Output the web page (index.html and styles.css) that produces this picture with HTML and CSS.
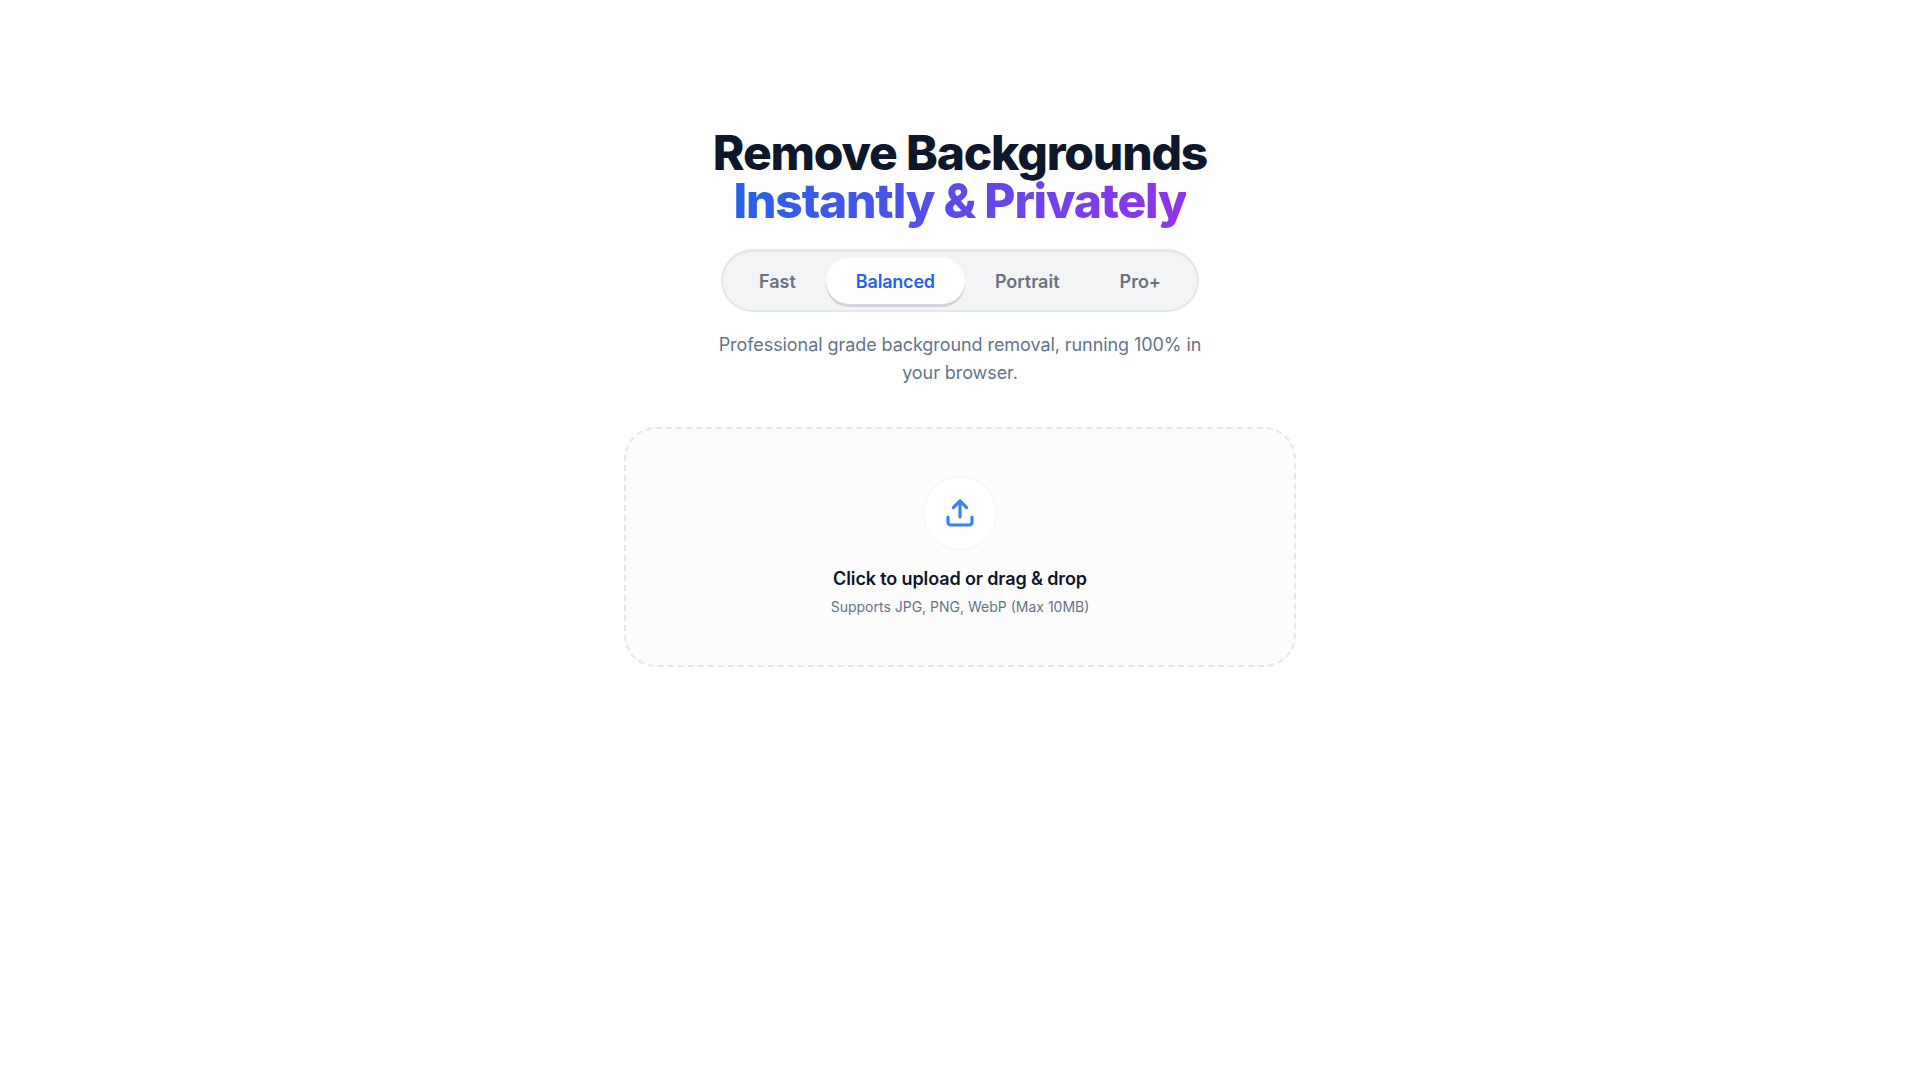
FILE: index.html
```html
<!DOCTYPE html>
<html lang="en">
<head>
    <meta charset="UTF-8">
    <meta name="viewport" content="width=device-width, initial-scale=1.0">
    <title>Remove Backgrounds</title>
    <link rel="stylesheet" href="styles.css">
</head>
<body>
    <div class="app-container">
        <h1 class="title">Remove Backgrounds<br><span class="gradient-text">Instantly &amp; Privately</span></h1>
        <div class="mode-tabs">
            <button class="mode-tab">Fast</button>
            <button class="mode-tab active">Balanced</button>
            <button class="mode-tab">Portrait</button>
            <button class="mode-tab">Pro+</button>
        </div>
        <p class="subtitle">Professional grade background removal, running 100% in your browser.</p>
        <div class="upload-box">
            <div class="upload-icon">
                <svg width="32" height="32" viewBox="0 0 24 24" fill="none" stroke="#3b82f6" stroke-width="2.4" stroke-linecap="round" stroke-linejoin="round">
                    <path d="M21 15v4a2 2 0 0 1-2 2H5a2 2 0 0 1-2-2v-4"/>
                    <polyline points="17 8 12 3 7 8"/>
                    <line x1="12" y1="3" x2="12" y2="15"/>
                </svg>
            </div>
            <div class="upload-title">Click to upload or drag &amp; drop</div>
            <div class="upload-hint">Supports JPG, PNG, WebP (Max 10MB)</div>
        </div>
    </div>
</body>
</html>
```

FILE: styles.css
```css
* {
    margin: 0;
    padding: 0;
    box-sizing: border-box;
    font-family: 'Inter', 'Liberation Sans', sans-serif;
}

body {
    background-color: #fff;
    min-height: 100vh;
}

.app-container {
    width: 672px;
    margin: 0 auto;
    padding-top: 129px;
    display: flex;
    flex-direction: column;
    align-items: center;
}

.title {
    font-size: 48px;
    font-weight: 800;
    line-height: 48px;
    letter-spacing: -1.2px;
    color: #0f172a;
    text-align: center;
    margin-bottom: 24px;
}

.gradient-text {
    background: linear-gradient(to right, #2563eb, #9333ea);
    -webkit-background-clip: text;
    background-clip: text;
    color: transparent;
}

.mode-tabs {
    display: flex;
    padding: 6px;
    background-color: #f3f4f6;
    border: 2px solid #e5e7eb;
    border-top-width: 3px;
    border-radius: 9999px;
    margin-bottom: 19px;
}

.mode-tab {
    padding: 0 30px;
    height: 46px;
    border: none;
    background: none;
    border-radius: 9999px;
    font-size: 18px;
    font-weight: 600;
    color: #6b7280;
}

.mode-tab.active {
    background-color: #fff;
    color: #2563eb;
    letter-spacing: -0.2px;
    box-shadow: 0 3px 0 #d1d5db;
}

.subtitle {
    width: 500px;
    font-size: 18px;
    line-height: 28px;
    letter-spacing: -0.07px;
    color: #64748b;
    text-align: center;
    margin-bottom: 40px;
}

.upload-box {
    width: 672px;
    height: 240px;
    background-color: #fcfcfd;
    border: 2px dashed #e5e7eb;
    border-radius: 32px;
    display: flex;
    flex-direction: column;
    align-items: center;
    padding-top: 47px;
}

.upload-icon {
    width: 74px;
    height: 74px;
    background-color: #fff;
    border: 1px solid #f3f4f6;
    border-radius: 50%;
    display: flex;
    justify-content: center;
    align-items: center;
    margin-bottom: 15px;
}

.upload-title {
    font-size: 18px;
    font-weight: 600;
    line-height: 28px;
    letter-spacing: -0.12px;
    color: #0f172a;
    margin-bottom: 2px;
}

.upload-hint {
    font-size: 14px;
    line-height: 24px;
    color: #64748b;
}
```
